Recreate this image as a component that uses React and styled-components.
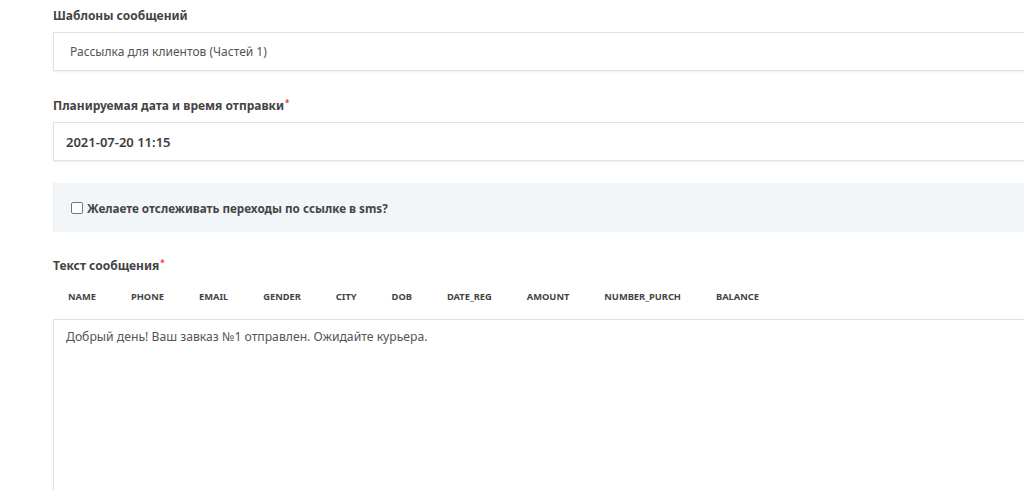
import React from "react";
import styled, { createGlobalStyle } from "styled-components";

const Global = createGlobalStyle`
  html, body { margin: 0; padding: 0; background: #fff; overflow: hidden; }
  body { font-family: "Noto Sans", "Open Sans", sans-serif; }
`;

const Page = styled.div`
  width: 1100px;
  height: 490px;
  overflow: hidden;
  padding: 7px 0 0 53px;
  box-sizing: border-box;
  display: flex;
  flex-direction: column;
`;

const Field = styled.div`
  display: flex;
  flex-direction: column;
  margin-bottom: ${(p) => p.$mb || 0}px;
`;

const Label = styled.label`
  font-size: 12px;
  font-weight: 700;
  color: #444;
  line-height: 18px;
  margin-bottom: ${(p) => p.$mb || 7}px;
`;

const Req = styled.span`
  color: #e53935;
  font-size: 8px;
  vertical-align: top;
  line-height: 12px;
  margin-left: 1px;
`;

const Input = styled.div`
  height: 37px;
  flex-shrink: 0;
  border: 1px solid #dfe2e4;
  box-shadow: 0 1px 2px rgba(0, 0, 0, 0.07);
  background: #fff;
  display: flex;
  align-items: center;
  padding-left: ${(p) => p.$pl || 12}px;
  font-size: ${(p) => (p.$strong ? 13 : 12)}px;
  color: ${(p) => (p.$strong ? "#3d3d3d" : "#555")};
  font-weight: ${(p) => (p.$strong ? 600 : 400)};
`;

const Panel = styled.div`
  height: 49px;
  flex-shrink: 0;
  background: #f3f6f8;
  border-left: 1px solid #e9edf0;
  display: flex;
  align-items: center;
  padding-left: 17px;
  margin-bottom: 25px;
`;

const Check = styled.span`
  width: 10px;
  height: 10px;
  border: 1.5px solid #777;
  border-radius: 2px;
  background: #fff;
  margin-right: 4px;
`;

const CheckText = styled.span`
  font-size: 11.7px;
  font-weight: 700;
  color: #444;
`;

const Tags = styled.div`
  display: flex;
  align-items: center;
  height: 26px;
  margin-left: 15px;
  margin-bottom: 10px;
`;

const Tag = styled.span`
  font-size: 9.3px;
  font-weight: 700;
  color: #444;
  margin-right: 35px;
`;

const TextArea = styled.div`
  height: 200px;
  flex-shrink: 0;
  border: 1px solid #dfe2e4;
  box-shadow: 0 1px 2px rgba(0, 0, 0, 0.07);
  background: #fff;
  padding: 8px 12px;
  font-size: 12.2px;
  color: #555;
`;

const tags = [
  "NAME",
  "PHONE",
  "EMAIL",
  "GENDER",
  "CITY",
  "DOB",
  "DATE_REG",
  "AMOUNT",
  "NUMBER_PURCH",
  "BALANCE",
];

export default function App() {
  return (
    <>
      <Global />
      <Page>
        <Field $mb={26}>
          <Label>Шаблоны сообщений</Label>
          <Input $pl={16}>Рассылка для клиентов (Частей 1)</Input>
        </Field>
        <Field $mb={22}>
          <Label>
            Планируемая дата и время отправки<Req>*</Req>
          </Label>
          <Input $strong>2021-07-20 11:15</Input>
        </Field>
        <Panel>
          <Check />
          <CheckText>Желаете отслеживать переходы по ссылке в sms?</CheckText>
        </Panel>
        <Field>
          <Label $mb={8}>
            Текст сообщения<Req>*</Req>
          </Label>
          <Tags>
            {tags.map((t) => (
              <Tag key={t}>{t}</Tag>
            ))}
          </Tags>
          <TextArea>Добрый день! Ваш завказ №1 отправлен. Ожидайте курьера.</TextArea>
        </Field>
      </Page>
    </>
  );
}
